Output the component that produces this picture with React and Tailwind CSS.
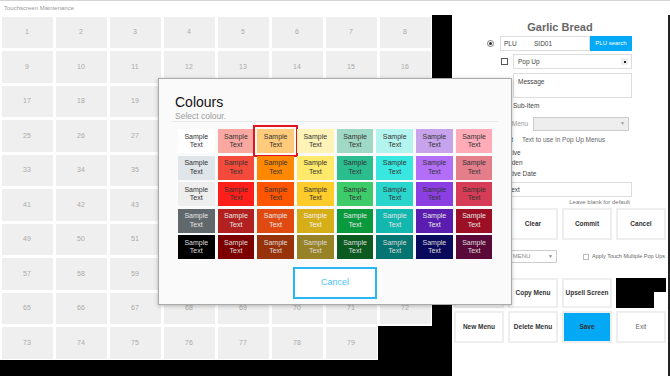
import React from 'react';

const swatches = [
  [
    'bg-[#ffffff] text-[#333]',
    'bg-[#f8a8a0] text-[#333]',
    'bg-[#ffcb7a] text-[#333]',
    'bg-[#fff3b8] text-[#333]',
    'bg-[#9fd8c4] text-[#333]',
    'bg-[#b4f4ef] text-[#333]',
    'bg-[#c7a3ec] text-[#333]',
    'bg-[#ffabb8] text-[#333]',
  ],
  [
    'bg-[#dfe5e8] text-[#333]',
    'bg-[#f44a3c] text-[#333]',
    'bg-[#ff8800] text-[#333]',
    'bg-[#ffe96a] text-[#333]',
    'bg-[#2cbd8f] text-[#333]',
    'bg-[#38e8e0] text-[#333]',
    'bg-[#b36ef8] text-[#333]',
    'bg-[#e37e8a] text-[#333]',
  ],
  [
    'bg-[#eeeeee] text-[#333]',
    'bg-[#ff1f1a] text-[#333]',
    'bg-[#ff5500] text-[#333]',
    'bg-[#fdcb2a] text-[#333]',
    'bg-[#3ecb6a] text-[#333]',
    'bg-[#2ad6cc] text-[#333]',
    'bg-[#8b3fe2] text-[#333]',
    'bg-[#d63c55] text-[#333]',
  ],
  [
    'bg-[#61686b] text-[#e6e6e6]',
    'bg-[#b32020] text-[#e6e6e6]',
    'bg-[#e04a10] text-[#e6e6e6]',
    'bg-[#d6ae18] text-[#f2f2f2]',
    'bg-[#0a9a3e] text-[#e6e6e6]',
    'bg-[#12b7ae] text-[#e6e6e6]',
    'bg-[#5a1db0] text-[#e6e6e6]',
    'bg-[#9c0f25] text-[#e6e6e6]',
  ],
  [
    'bg-[#000000] text-[#dddddd]',
    'bg-[#7c0000] text-[#dddddd]',
    'bg-[#98320a] text-[#dddddd]',
    'bg-[#978226] text-[#dddddd]',
    'bg-[#0b5a20] text-[#dddddd]',
    'bg-[#047570] text-[#dddddd]',
    'bg-[#0a0a5c] text-[#dddddd]',
    'bg-[#5a0a38] text-[#dddddd]',
  ],
];

const tiles = Array.from({ length: 79 }, (_, i) => i + 1);

const Btn = ({ label, className = '' }) => (
  <div
    className={`h-full flex items-center justify-center border-2 border-[#eeeeee] text-[6.5px] font-bold text-[#333] ${className}`}
  >
    {label}
  </div>
);

const RightPanel = () => (
  <div className="w-[218px] h-full bg-white border-r-2 border-[#222] text-[6.5px] text-[#444] flex flex-col">
    <div className="mt-[6px] h-[13px] leading-[13px] text-center text-[11px] font-bold text-[#666]">Garlic Bread</div>

    <div className="mt-[2px] h-[15px] flex items-center pl-[35px]">
      <div className="w-[7px] h-[7px] rounded-full border border-[#777] flex items-center justify-center">
        <div className="w-[3px] h-[3px] rounded-full bg-[#333]" />
      </div>
      <div className="ml-[6px] w-[90px] h-full border border-[#dddddd] flex items-center px-[3px]">
        <span className="w-[30px]">PLU</span>
        <span>SID01</span>
      </div>
      <div className="w-[42px] h-full bg-[#03a9f4] text-white text-[6px] flex items-center justify-center">PLU search</div>
    </div>

    <div className="mt-[3px] h-[15px] flex items-center pl-[49px]">
      <div className="w-[7px] h-[7px] border border-[#555]" />
      <div className="ml-[5px] w-[119px] h-full border border-[#dddddd] flex items-center justify-between pl-[4px] pr-[3px]">
        <span>Pop Up</span>
        <div className="w-[7px] h-[7px] bg-[#eeeeee] flex items-center justify-center">
          <div className="w-[2px] h-[2px] bg-[#222]" />
        </div>
      </div>
    </div>

    <div className="mt-[4px] ml-[61px] w-[119px] h-[25px] border border-[#dddddd] pl-[4px] pt-[3px]">Message</div>

    <div className="mt-[3px] h-[10px] leading-[10px] pl-[61px]">Sub-Item</div>

    <div className="mt-[6px] h-[14px] flex items-center">
      <span className="w-[76px] text-right text-[#999]">Sub Menu</span>
      <div className="ml-[5px] w-[96px] h-full bg-[#eeeeee] border border-[#cccccc] flex items-center justify-end pr-[3px] text-[5px] text-[#999]">▼</div>
    </div>

    <div className="mt-[4px] h-[10px] flex items-center">
      <span className="w-[61px] text-right">Pop Up Text</span>
      <span className="ml-[9px] text-[#666]">Text to use in Pop Up Menus</span>
    </div>

    <div className="mt-[3px] h-[10px] leading-[10px] pl-[51px]">Active</div>
    <div className="h-[10px] leading-[10px] pl-[50px]">Hidden</div>
    <div className="mt-[1px] h-[10px] leading-[10px] pl-[44px]">Effective Date</div>

    <div className="mt-[3px] ml-[51px] w-[129px] h-[15px] border border-[#dddddd] flex items-center pl-[4px]">Text</div>
    <div className="mt-[1px] h-[8px] leading-[8px] text-right pr-[38px] text-[6px] text-[#777]">Leave blank for default</div>

    <div className="mt-[2px] h-[32px] grid grid-cols-[repeat(4,50px)] gap-x-[4px] pl-[2px]">
      <Btn label="Colour" />
      <Btn label="Clear" />
      <Btn label="Commit" />
      <Btn label="Cancel" />
    </div>

    <div className="mt-[10px] h-[13px] flex items-center">
      <div className="ml-[40px] w-[65px] h-full border border-[#cccccc] flex items-center justify-between pl-[3px] pr-[3px] text-[6px] text-[#888]">
        <span>MAIN MENU</span>
        <span className="text-[5px]">▼</span>
      </div>
      <div className="ml-[26px] w-[6px] h-[6px] shrink-0 border border-[#bbb]" />
      <span className="ml-[3px] whitespace-nowrap text-[5.5px] text-[#666]">Apply Touch Multiple Pop Ups</span>
    </div>

    <div className="mt-[15px] h-[30px] grid grid-cols-[repeat(4,50px)] gap-x-[4px] pl-[2px]">
      <Btn label="Print Menu" />
      <Btn label="Copy Menu" />
      <Btn label="Upsell Screen" />
      <div className="h-full bg-black" />
    </div>

    <div className="mt-[3px] h-[32px] grid grid-cols-[repeat(4,50px)] gap-x-[4px] pl-[2px]">
      <Btn label="New Menu" />
      <Btn label="Delete Menu" />
      <Btn label="Save" className="bg-[#03a9f4] border-[#03a9f4]" />
      <Btn label="Exit" className="font-normal text-[#666]" />
    </div>
  </div>
);

const ColourModal = () => (
  <div className="absolute left-[158px] top-[78px] w-[354px] h-[227px] bg-[#fafafa] border border-[#aaaaaa] shadow-[0_1px_4px_rgba(0,0,0,0.25)] flex flex-col">
    <div className="pt-[15px] pl-[16px] text-[14px] leading-[16px] text-[#111]">Colours</div>
    <div className="pl-[16px] mt-[1px] text-[8.5px] leading-[10px] text-[#9a9a9a]">Select colour.</div>
    <div className="mx-[13px] border-b border-[#e8e8e8]" />
    <div className="mt-[7px] ml-[19px] grid grid-cols-[repeat(8,36.5px)] gap-x-[3.2px] auto-rows-[24px] gap-y-[2.5px]">
      {swatches.map((row, r) =>
        row.map((cls, c) => (
          <div
            key={`${r}-${c}`}
            className={`${cls} flex flex-col items-center justify-center text-[7px] leading-[8.5px] ${
              r === 0 && c === 2 ? 'outline-2 outline-[#e5141b] outline-offset-[2px]' : ''
            }`}
          >
            <span>Sample</span>
            <span>Text</span>
          </div>
        ))
      )}
    </div>
    <div className="mt-[8px] mx-auto w-[84px] h-[32px] bg-white border-2 border-[#29b6f6] text-[#4fc3f7] text-[9px] flex items-center justify-center">
      Cancel
    </div>
  </div>
);

export default function App() {
  return (
    <div className="relative w-[670px] h-[376px] overflow-hidden bg-black font-['Liberation_Sans',Arial,sans-serif]">
      <div className="h-[15px] bg-white border-t border-[#d4d4d4] pl-[4px] flex items-center text-[6px] text-[#9a9a9a]">
        Touchscreen Maintenance
      </div>
      <div className="flex h-[361px]">
        <div className="w-[432px] grid grid-cols-[repeat(8,54px)] auto-rows-[34.5px] content-start">
          {tiles.map((n) => (
            <div key={n} className="bg-white p-[1.5px]">
              <div className="w-full h-full bg-[#efefef] flex items-center justify-center text-[7px] text-[#aaaaaa]">{n}</div>
            </div>
          ))}
        </div>
        <div className="w-[20px]" />
        <RightPanel />
      </div>
      <ColourModal />
      <div className="absolute left-[654px] top-[292px] w-[13px] h-[17px] bg-white" />
    </div>
  );
}
